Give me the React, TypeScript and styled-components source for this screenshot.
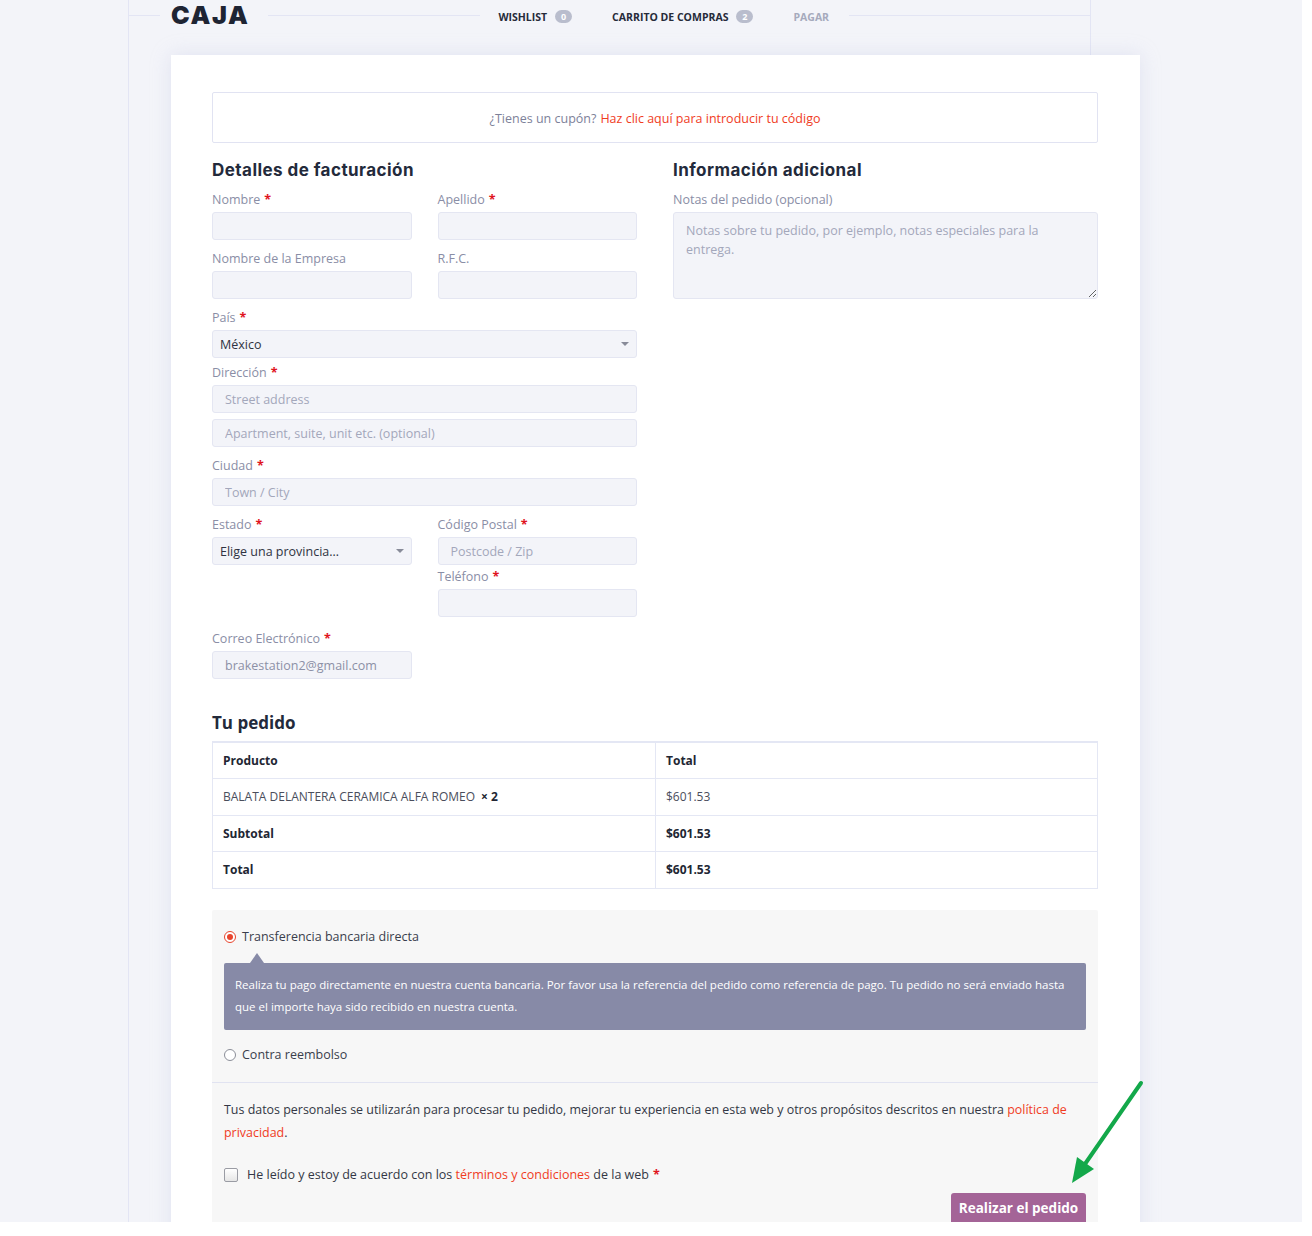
import React from "react";
import styled, { createGlobalStyle } from "styled-components";

const GlobalStyle = createGlobalStyle`
  html, body { margin: 0; padding: 0; background: #ffffff; }
  body { font-family: "Open Sans", "Liberation Sans", sans-serif; color: #3a3f50; }
  * { box-sizing: border-box; }
`;

const Page = styled.div`
  position: relative;
  width: 1302px;
  height: 1222px;
  padding-top: 15px;
  background: #f3f4f9;
  overflow: hidden;
`;

const Shell = styled.div`
  margin-left: 128px;
  width: 963px;
  min-height: 1400px;
  border-left: 1px solid #e3e5f4;
  border-right: 1px solid #e3e5f4;
`;

const Header = styled.header`
  margin-top: -15px;
  height: 30px;
  display: flex;
  align-items: center;
`;

const Rule = styled.span<{ $w?: number }>`
  height: 1px;
  background: #e3e5f4;
  flex: ${(p) => (p.$w ? `0 0 ${p.$w}px` : "1 1 auto")};
`;

const Logo = styled.div`
  margin: 0 19px 0 11px;
  font-family: Inter, "Liberation Sans", sans-serif;
  font-weight: 900;
  font-size: 25px;
  letter-spacing: 1.6px;
  line-height: 1;
  color: #1e2433;
`;

const Nav = styled.nav`
  display: flex;
  align-items: center;
  gap: 40px;
  padding: 3px 20px 0 18px;
`;

const NavItem = styled.span<{ $muted?: boolean }>`
  display: inline-flex;
  align-items: center;
  font-size: 10.5px;
  font-weight: 700;
  text-transform: uppercase;
  color: ${(p) => (p.$muted ? "#a6aabd" : "#262b3a")};
`;

const Badge = styled.span`
  margin-left: 8px;
  min-width: 17px;
  height: 13px;
  padding: 0 5px;
  border-radius: 7px;
  background: #b9bdcd;
  color: #ffffff;
  font-size: 9px;
  line-height: 13px;
  text-align: center;
`;

const Card = styled.main`
  margin: 25px 0 0 42px;
  width: 969px;
  background: #ffffff;
  padding: 37px 42px 40px 41px;
  box-shadow: 0 0 18px rgba(190, 196, 225, 0.35);
`;

const Coupon = styled.div`
  height: 51px;
  padding-top: 2px;
  border: 1px solid #e1e3f2;
  border-radius: 2px;
  display: flex;
  align-items: center;
  justify-content: center;
  font-size: 12.5px;
  color: #7d8199;
`;

const Link = styled.a`
  color: #f03c1e;
  text-decoration: none;
`;

const CouponLink = styled(Link)`
  margin-left: 4px;
`;

const Columns = styled.div`
  display: grid;
  grid-template-columns: 425px 425px;
  column-gap: 36px;
  margin-top: 16px;
`;

const Heading = styled.h3<{ $alt?: boolean }>`
  margin: 0 0 ${(p) => (p.$alt ? 7 : 9)}px;
  font-family: ${(p) =>
    p.$alt ? `"Open Sans", "Liberation Sans", sans-serif` : `Inter, "Liberation Sans", sans-serif`};
  font-weight: 700;
  font-size: 17px;
  letter-spacing: ${(p) => (p.$alt ? "0" : "0.45px")};
  line-height: 22px;
  color: #232a3b;
`;

const Row = styled.div<{ $mt?: number }>`
  display: grid;
  grid-template-columns: 1fr 1fr;
  column-gap: 26px;
  margin-top: ${(p) => p.$mt ?? 0}px;
`;

const Field = styled.div<{ $mt?: number }>`
  margin-top: ${(p) => p.$mt ?? 0}px;
`;

const Label = styled.label`
  display: block;
  font-size: 12.5px;
  line-height: 19px;
  margin-bottom: 3px;
  color: #8a8ea6;
`;

const Req = styled.span`
  color: #e0141e;
  font-weight: 700;
  margin-left: 4px;
`;

const TextInput = styled.input<{ $mt?: number }>`
  display: block;
  width: 100%;
  height: 28px;
  margin-top: ${(p) => p.$mt ?? 0}px;
  background: #f3f4f9;
  border: 1px solid #e4e6f2;
  border-radius: 3px;
  padding: 0 12px;
  font-family: "Open Sans", "Liberation Sans", sans-serif;
  font-size: 12.5px;
  color: #8c90a6;
  outline: none;
  &::placeholder {
    color: #a3a7bb;
  }
`;

const TextArea = styled.textarea`
  display: block;
  width: 100%;
  height: 87px;
  background: #f3f4f9;
  border: 1px solid #e4e6f2;
  border-radius: 3px;
  padding: 8px 12px;
  font-family: "Open Sans", "Liberation Sans", sans-serif;
  font-size: 12.5px;
  line-height: 19px;
  resize: vertical;
  outline: none;
  &::placeholder {
    color: #a3a7bb;
  }
`;

const Select = styled.div`
  position: relative;
  height: 28px;
  background: #f3f4f9;
  border: 1px solid #e4e6f2;
  border-radius: 3px;
  padding: 0 7px;
  display: flex;
  align-items: center;
  font-size: 12.5px;
  color: #2f3342;
  &::after {
    content: "";
    position: absolute;
    right: 7px;
    top: 11px;
    border-left: 4px solid transparent;
    border-right: 4px solid transparent;
    border-top: 4px solid #888b99;
  }
`;

const OrderTable = styled.table`
  width: 100%;
  border-collapse: collapse;
  border: 1px solid #e4e7f4;
  border-top-width: 2px;
  font-size: 12px;
  color: #3d4150;
`;

const Cell = styled.td<{ $bold?: boolean; $w?: number }>`
  height: 36.5px;
  padding: 0 10px;
  border: 1px solid #e4e7f4;
  font-weight: ${(p) => (p.$bold ? 700 : 400)};
  color: ${(p) => (p.$bold ? "#222633" : "#4a4e5c")};
  width: ${(p) => (p.$w ? `${p.$w}px` : "auto")};
  text-align: left;
`;

const Qty = styled.strong`
  margin-left: 6px;
  color: #222633;
`;

const Payment = styled.section`
  margin-top: 21px;
  background: #f7f7f7;
  border-radius: 2px;
`;

const Methods = styled.div`
  padding: 17px 12px 17px;
  border-bottom: 1px solid #e1e3f1;
`;

const Method = styled.div<{ $mt?: number }>`
  display: flex;
  align-items: center;
  height: 20px;
  margin-top: ${(p) => p.$mt ?? 0}px;
  font-size: 12.5px;
  color: #3a3e4c;
`;

const Radio = styled.span<{ $on?: boolean }>`
  width: 12px;
  height: 12px;
  margin-right: 6px;
  border-radius: 50%;
  border: 1px solid ${(p) => (p.$on ? "#e8442c" : "#8b8e98")};
  background: #ffffff;
  display: inline-flex;
  align-items: center;
  justify-content: center;
  &::after {
    content: "";
    width: 6px;
    height: 6px;
    border-radius: 50%;
    background: ${(p) => (p.$on ? "#e8442c" : "transparent")};
  }
`;

const Description = styled.div`
  position: relative;
  margin-top: 16px;
  padding: 11px 11px 12px;
  background: #878aa7;
  border-radius: 2px;
  color: #ffffff;
  font-size: 11.5px;
  line-height: 22px;
  &::before {
    content: "";
    position: absolute;
    top: -10px;
    left: 26px;
    border-left: 7px solid transparent;
    border-right: 7px solid transparent;
    border-bottom: 10px solid #878aa7;
  }
`;

const PlaceOrder = styled.div`
  padding: 15px 12px 0;
`;

const Privacy = styled.p`
  margin: 0;
  font-size: 12.45px;
  line-height: 23px;
  color: #333745;
`;

const Terms = styled.div`
  display: flex;
  align-items: center;
  height: 22px;
  margin-top: 20px;
  font-size: 12.5px;
  color: #333745;
`;

const Check = styled.span`
  width: 14px;
  height: 14px;
  margin-right: 9px;
  border: 1px solid #9a9ca4;
  border-radius: 2px;
  background: linear-gradient(#ffffff, #e6e6e6);
`;

const Actions = styled.div`
  display: flex;
  justify-content: flex-end;
  margin-top: 7px;
`;

const Button = styled.button`
  width: 135px;
  height: 33px;
  padding: 0 0 3px;
  border: none;
  border-radius: 3px;
  background: #a46497;
  color: #ffffff;
  font-family: "Open Sans", "Liberation Sans", sans-serif;
  font-size: 13.5px;
  font-weight: 700;
  line-height: 28px;
  text-align: center;
`;

const ArrowMark = styled.svg`
  position: absolute;
  left: 1060px;
  top: 1075px;
  width: 90px;
  height: 115px;
`;

export default function App() {
  return (
    <>
      <GlobalStyle />
      <Page>
        <Shell>
          <Header>
            <Rule $w={31} />
            <Logo>CAJA</Logo>
            <Rule $w={212} />
            <Nav>
              <NavItem>
                Wishlist<Badge>0</Badge>
              </NavItem>
              <NavItem>
                Carrito de compras<Badge>2</Badge>
              </NavItem>
              <NavItem $muted>Pagar</NavItem>
            </Nav>
            <Rule />
          </Header>

          <Card>
            <Coupon>
              ¿Tienes un cupón?
              <CouponLink href="#">Haz clic aquí para introducir tu código</CouponLink>
            </Coupon>

            <Columns>
              <div>
                <Heading>Detalles de facturación</Heading>
                <Row>
                  <Field>
                    <Label>
                      Nombre<Req>*</Req>
                    </Label>
                    <TextInput />
                  </Field>
                  <Field>
                    <Label>
                      Apellido<Req>*</Req>
                    </Label>
                    <TextInput />
                  </Field>
                </Row>
                <Row $mt={9}>
                  <Field>
                    <Label>Nombre de la Empresa</Label>
                    <TextInput />
                  </Field>
                  <Field>
                    <Label>R.F.C.</Label>
                    <TextInput />
                  </Field>
                </Row>
                <Field $mt={9}>
                  <Label>
                    País<Req>*</Req>
                  </Label>
                  <Select>México</Select>
                </Field>
                <Field $mt={5}>
                  <Label>
                    Dirección<Req>*</Req>
                  </Label>
                  <TextInput placeholder="Street address" />
                  <TextInput $mt={6} placeholder="Apartment, suite, unit etc. (optional)" />
                </Field>
                <Field $mt={9}>
                  <Label>
                    Ciudad<Req>*</Req>
                  </Label>
                  <TextInput placeholder="Town / City" />
                </Field>
                <Row $mt={9}>
                  <Field>
                    <Label>
                      Estado<Req>*</Req>
                    </Label>
                    <Select>Elige una provincia…</Select>
                  </Field>
                  <Field>
                    <Label>
                      Código Postal<Req>*</Req>
                    </Label>
                    <TextInput placeholder="Postcode / Zip" />
                  </Field>
                </Row>
                <Row $mt={2}>
                  <div />
                  <Field>
                    <Label>
                      Teléfono<Req>*</Req>
                    </Label>
                    <TextInput />
                  </Field>
                </Row>
                <Row $mt={12}>
                  <Field>
                    <Label>
                      Correo Electrónico<Req>*</Req>
                    </Label>
                    <TextInput defaultValue="brakestation2@gmail.com" />
                  </Field>
                </Row>
              </div>

              <div>
                <Heading>Información adicional</Heading>
                <Field>
                  <Label>Notas del pedido (opcional)</Label>
                  <TextArea placeholder="Notas sobre tu pedido, por ejemplo, notas especiales para la entrega." />
                </Field>
              </div>
            </Columns>

            <Field $mt={33}>
              <Heading $alt>Tu pedido</Heading>
            </Field>
            <OrderTable>
              <thead>
                <tr>
                  <Cell as="th" $bold $w={443}>
                    Producto
                  </Cell>
                  <Cell as="th" $bold>
                    Total
                  </Cell>
                </tr>
              </thead>
              <tbody>
                <tr>
                  <Cell>
                    BALATA DELANTERA CERAMICA ALFA ROMEO<Qty>× 2</Qty>
                  </Cell>
                  <Cell>$601.53</Cell>
                </tr>
                <tr>
                  <Cell $bold>Subtotal</Cell>
                  <Cell $bold>$601.53</Cell>
                </tr>
                <tr>
                  <Cell $bold>Total</Cell>
                  <Cell $bold>$601.53</Cell>
                </tr>
              </tbody>
            </OrderTable>

            <Payment>
              <Methods>
                <Method>
                  <Radio $on />
                  Transferencia bancaria directa
                </Method>
                <Description>
                  Realiza tu pago directamente en nuestra cuenta bancaria. Por favor usa la referencia del pedido como
                  referencia de pago. Tu pedido no será enviado hasta que el importe haya sido recibido en nuestra
                  cuenta.
                </Description>
                <Method $mt={15}>
                  <Radio />
                  Contra reembolso
                </Method>
              </Methods>
              <PlaceOrder>
                <Privacy>
                  Tus datos personales se utilizarán para procesar tu pedido, mejorar tu experiencia en esta web y otros
                  propósitos descritos en nuestra <Link href="#">política de privacidad</Link>.
                </Privacy>
                <Terms>
                  <Check />
                  He leído y estoy de acuerdo con los&nbsp;<Link href="#">términos y condiciones</Link>&nbsp;de la web
                  <Req>*</Req>
                </Terms>
                <Actions>
                  <Button>Realizar el pedido</Button>
                </Actions>
              </PlaceOrder>
            </Payment>
          </Card>
        </Shell>

        <ArrowMark viewBox="0 0 90 115">
          <line x1="81" y1="8" x2="25" y2="89" stroke="#13a84a" strokeWidth="4" strokeLinecap="round" />
          <polygon points="12,108 17,82 34,94" fill="#13a84a" />
        </ArrowMark>
      </Page>
    </>
  );
}
